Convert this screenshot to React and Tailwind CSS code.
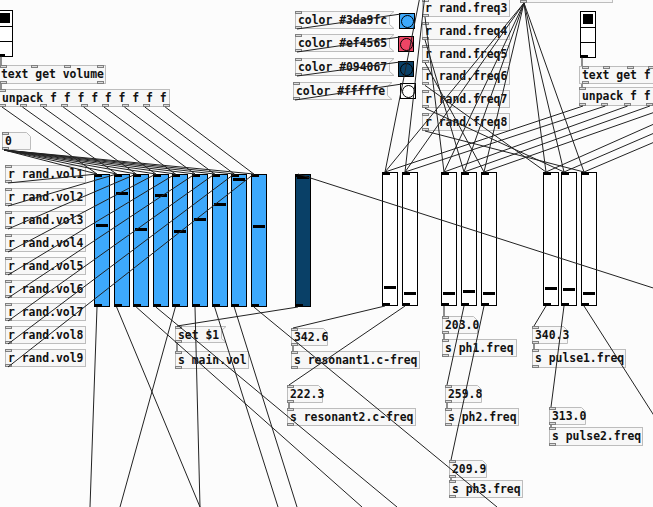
const blueX = [94, 113.6, 133.2, 152.8, 172.4, 192, 211.6, 231.2, 250.8];
const blueKnob = [225, 193, 229, 195, 231, 219, 204, 179, 226];
const whiteX = [382, 402, 441, 461, 481, 543, 561, 581];
const whiteKnob = [287, 293, 293, 291, 293, 288, 289, 293];

const spread = (n, w) =>
  n <= 1 ? [0] : Array.from({ length: n }, (_, i) => Math.round((i * (w - 7)) / (n - 1)));

function Box({ x, y, w, h = 18, text, ins = 1, outs = 1, kind = 'obj', flow = false }) {
  const inPos = Array.isArray(ins) ? ins : spread(ins, w);
  const outPos = Array.isArray(outs) ? outs : spread(outs, w);
  const pts =
    kind === 'msg'
      ? `0.5,0.5 ${w + 4},0.5 ${w - 0.5},4.5 ${w - 0.5},${h - 4.5} ${w + 4},${h - 0.5} 0.5,${h - 0.5}`
      : `0.5,0.5 ${w - 4.5},0.5 ${w - 0.5},4.5 ${w - 0.5},${h - 0.5} 0.5,${h - 0.5}`;
  return (
    <div
      className={flow ? 'relative shrink-0' : 'absolute'}
      style={flow ? { width: w, height: h } : { left: x, top: y, width: w, height: h }}
    >
      {kind === 'obj' ? (
        <div className="absolute inset-0 border border-[#bdbdbd] bg-[#f7f7f7]" />
      ) : (
        <svg className="absolute left-0 top-0 overflow-visible" width={w + 5} height={h}>
          <polygon points={pts} fill="#f7f7f7" stroke="#bdbdbd" strokeWidth="1" />
        </svg>
      )}
      <span className="absolute left-[3px] top-0 whitespace-pre text-[11.4px] leading-[18px] font-bold text-[#111]">
        {text}
      </span>
      {inPos.map((p, i) => (
        <div key={'i' + i} className="absolute top-0 h-[3px] w-[7px] border border-[#808080] bg-[#dcdcdc]" style={{ left: p }} />
      ))}
      {outPos.map((p, i) => (
        <div key={'o' + i} className="absolute bottom-0 h-[3px] w-[7px] border border-[#808080] bg-[#dcdcdc]" style={{ left: p }} />
      ))}
    </div>
  );
}

function Slider({ x, y, h, knob, fill, flow = false }) {
  return (
    <div
      className={`${flow ? 'relative shrink-0' : 'absolute'} w-[16px] border border-black ${fill}`}
      style={flow ? { height: h } : { left: x, top: y, height: h }}
    >
      <div className="absolute left-[1px] right-[1px] h-[3px] bg-black" style={{ top: knob - y - 2 }} />
      <div className="absolute left-0 top-0 h-[2px] w-[7px] bg-black" />
      <div className="absolute left-0 bottom-0 h-[2px] w-[7px] bg-black" />
    </div>
  );
}

function Bang({ x, y, fill }) {
  return (
    <div className={`absolute flex h-[16px] w-[16px] items-center justify-center border border-black ${fill}`} style={{ left: x, top: y }}>
      <div className="h-[13px] w-[13px] rounded-full border border-black" />
    </div>
  );
}

function Radio({ x, y }) {
  return (
    <div className="absolute flex w-[16px] flex-col border border-black bg-white" style={{ left: x, top: y }}>
      <div className="relative h-[15px]">
        <div className="absolute left-[2px] top-[2px] h-[10px] w-[10px] bg-black" />
      </div>
      <div className="h-[15px] border-t border-black" />
      <div className="relative h-[15px] border-t border-black">
        <div className="absolute bottom-0 left-0 h-[2px] w-[7px] bg-black" />
      </div>
    </div>
  );
}

const lines = [];
// left volume chain
lines.push([1, 56, 1, 65], [1, 84, 1, 89]);
blueX.forEach((sx, i) => {
  lines.push([-1 + i * 20.4 + 3, 107, sx + 3, 174]);
  lines.push([4, 150, sx + 3, 174]);
  lines.push([8, 183 + 23 * i, sx + 3, 174]);
});
const blueEnds = [[90, 507], [200, 507], [362, 507], [397, 507], [120, 507], [200, 507], [278, 507], [297, 507], [497, 507]];
blueX.forEach((sx, i) => lines.push([sx + 3, 307, ...blueEnds[i]]));
lines.push([298, 307, 177, 326], [298, 174, 700, 303], [177, 343, 177, 351]);

// white sliders
const whiteEnds = [[293, 328], [289, 385], [444, 316], [447, 385], [451, 460], [534, 326], [551, 407], [690, 472]];
whiteX.forEach((sx, i) => {
  lines.push([sx + 3, 306, ...whiteEnds[i]]);
  lines.push([583 + i * 22.3, 106, sx + 3, 172]);
  lines.push([524, 3, sx + 3, 172]);
  lines.push([425, -28.6 + 22.8 * i, sx + 3, 172]);
});
lines.push(
  [293, 346, 293, 351], [289, 403, 289, 408], [444, 334, 444, 339], [447, 403, 447, 408],
  [451, 478, 451, 480], [534, 344, 534, 349], [551, 425, 551, 427]
);
// colors
const msgY = [11, 34, 58, 82];
const msgX = [295, 295, 295, 293];
const bngX = [399, 398, 398, 400];
const bngY = [13, 36, 61, 83];
msgY.forEach((my, i) => lines.push([msgX[i] + 2, my + 18, bngX[i] + 2, bngY[i] + 1]));
lines.push([582, 57, 582, 66], [582, 84, 582, 87]);

const colors = [
  ['color #3da9fc', 'bg-[#3da9fc]'],
  ['color #ef4565', 'bg-[#ef4565]'],
  ['color #094067', 'bg-[#094067]'],
  ['color #fffffe', 'bg-[#fffffe]'],
];

export default function App() {
  return (
    <div className="relative h-[507px] w-[653px] overflow-hidden bg-[#fcfcfc] font-['DejaVu_Sans_Mono',monospace]">
      {/* left: volume */}
      <Radio x={-3} y={10} />
      <Box x={-2} y={65} w={108} h={19} text="text get volume" ins={[2, 33, 66, 99]} outs={[2, 99]} />
      <Box x={-1} y={89} w={171} text="unpack f f f f f f f f f" outs={9} />
      <Box x={2} y={132} w={29} text="0" kind="num" />

      <div className="absolute left-[5px] top-[165px] flex flex-col gap-[5px]">
        {Array.from({ length: 9 }, (_, i) => (
          <Box key={i} flow w={81} text={`r rand.vol${i + 1}`} ins={0} />
        ))}
      </div>

      <div className="absolute left-[94px] top-[174px] flex gap-[3.6px]">
        {blueKnob.map((k, i) => (
          <Slider key={i} flow y={174} h={133} knob={k} fill="bg-[#3da9fc]" />
        ))}
      </div>
      <Slider x={295} y={174} h={133} knob={177} fill="bg-[#094067]" />

      <Box x={175} y={326} w={47} h={17} text="set $1" kind="msg" />
      <Box x={175} y={351} w={74} text="s main.vol" outs={0} />

      {/* colours */}
      {colors.map(([t, c], i) => (
        <div key={t}>
          <Box x={msgX[i]} y={msgY[i]} w={95} text={t} kind="msg" />
          <Bang x={bngX[i]} y={bngY[i]} fill={c} />
        </div>
      ))}

      {/* frequency receivers */}
      <div className="absolute left-[422px] top-[-1px] flex flex-col gap-[4.8px]">
        {[3, 4, 5, 6, 7, 8].map((n) => (
          <Box key={n} flow w={88} text={`r rand.freq${n}`} ins={0} />
        ))}
      </div>
      <Box x={520} y={-16} w={93} h={19} text="" ins={0} />

      {/* right: frequencies */}
      <Radio x={580} y={11} />
      <Box x={579} y={66} w={120} text="text get f" ins={[3, 24, 48, 69]} outs={[3]} />
      <Box x={579} y={87} w={164} h={19} text="unpack f f" outs={8} />
      {whiteX.map((sx, i) => (
        <Slider key={sx} x={sx} y={172} h={134} knob={whiteKnob[i]} fill="bg-white" />
      ))}

      <Box x={291} y={328} w={37} text="342.6" kind="num" />
      <Box x={291} y={351} w={129} text="s resonant1.c-freq" outs={0} />
      <Box x={287} y={385} w={36} text="222.3" kind="num" />
      <Box x={287} y={408} w={129} text="s resonant2.c-freq" outs={0} />
      <Box x={442} y={316} w={36} text="203.0" kind="num" />
      <Box x={442} y={339} w={75} text="s ph1.freq" outs={0} />
      <Box x={445} y={385} w={37} text="259.8" kind="num" />
      <Box x={445} y={408} w={74} text="s ph2.freq" outs={0} />
      <Box x={449} y={460} w={38} text="209.9" kind="num" />
      <Box x={449} y={480} w={74} text="s ph3.freq" outs={0} />
      <Box x={532} y={326} w={36} text="340.3" kind="num" />
      <Box x={532} y={349} w={94} h={19} text="s pulse1.freq" outs={0} />
      <Box x={549} y={407} w={37} text="313.0" kind="num" />
      <Box x={549} y={427} w={94} h={19} text="s pulse2.freq" outs={0} />

      {/* cords */}
      <svg className="pointer-events-none absolute left-0 top-0" width="653" height="507">
        {lines.map(([x1, y1, x2, y2], i) => (
          <line key={i} x1={x1} y1={y1} x2={x2} y2={y2} stroke="#222" strokeWidth="1" />
        ))}
      </svg>
    </div>
  );
}
